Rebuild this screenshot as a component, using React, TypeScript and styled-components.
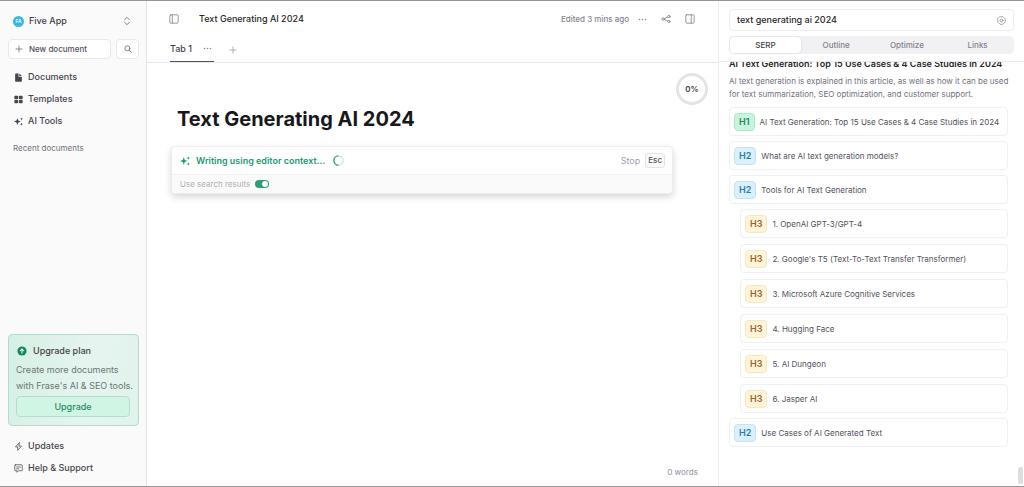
import React from 'react';
import styled, { createGlobalStyle, css } from 'styled-components';

const Global = createGlobalStyle`
  *, *::before, *::after { box-sizing: border-box; }
  body {
    margin: 0;
    background: #fff;
    color: #3f3f46;
    font-family: Inter, "Liberation Sans", sans-serif;
    font-size: 9px;
    line-height: 16px;
  }
  button, input { font: inherit; color: inherit; margin: 0; }
  button { border: 0; padding: 0; background: none; cursor: pointer; }
  h1, h2, p, ul { margin: 0; padding: 0; }
  ul { list-style: none; }
  svg { display: block; flex: none; }
`;

const Page = styled.div`
  display: grid;
  grid-template-columns: 147px minmax(0, 1fr) 305px;
  height: 100vh;
  border-top: 1px solid #97959a;
  border-bottom: 1px solid #97959a;
`;

/* ---------- sidebar ---------- */

const Sidebar = styled.aside`
  display: flex;
  flex-direction: column;
  padding: 12px 7px 7px 8px;
  background: #fafafa;
  border-right: 1px solid #e4e4e7;
`;

const Account = styled.button`
  display: flex;
  align-items: center;
  gap: 5px;
  padding: 0 8px 0 5px;
  font-weight: 500;
  text-align: left;
`;

const Avatar = styled.span`
  width: 11px;
  height: 11px;
  border-radius: 50%;
  background: #38b6ea;
  color: #fff;
  font-size: 5px;
  line-height: 11px;
  text-align: center;
`;

const Grow = styled.span`
  flex: 1;
`;

const Actions = styled.div`
  display: flex;
  gap: 5px;
  margin: 10px 0 7px;
`;

const OutlineButton = styled.button<{ $wide?: boolean }>`
  display: flex;
  align-items: center;
  gap: 6px;
  height: 20px;
  padding: 0 6px;
  border: 1px solid #e8e8eb;
  border-radius: 4px;
  background: #fff;
  color: #52525b;
  font-size: 8px;
  font-weight: 500;
  ${p => p.$wide ? css`flex: 1;` : css`width: 23px; justify-content: center;`}
`;

const NavLink = styled.a`
  display: flex;
  align-items: center;
  gap: 5px;
  height: 22px;
  padding-left: 6px;
  color: #46464d;
  font-weight: 500;
  text-decoration: none;
  svg { width: 9px; height: 9px; }
`;

const SectionLabel = styled.p`
  margin: 8px 0 auto;
  padding-left: 5px;
  color: #71717a;
  font-size: 8px;
`;

const UpgradeCard = styled.section`
  display: flex;
  flex-direction: column;
  margin-bottom: 9px;
  padding: 8px 8px 8px 7px;
  border: 1px solid #b3dccc;
  border-radius: 4px;
  background: linear-gradient(100deg, #d5f0e5, #e6f4ef 60%, #e0f3eb);
`;

const UpgradeTitle = styled.h2`
  display: flex;
  align-items: center;
  gap: 6px;
  margin-bottom: 3px;
  padding-left: 1px;
  font-size: 9px;
  font-weight: 500;
`;

const UpgradeText = styled.p`
  color: #6b7772;
  white-space: nowrap;
`;

const UpgradeButton = styled.button`
  height: 21px;
  margin-top: 2px;
  border: 1px solid #b0e0cd;
  border-radius: 4px;
  background: #d1f5e5;
  color: #2a8a66;
  font-weight: 500;
`;

/* ---------- editor ---------- */

const Main = styled.main`
  position: relative;
  display: flex;
  flex-direction: column;
  border-right: 1px solid #ececef;
`;

const Header = styled.header`
  display: flex;
  align-items: center;
  height: 36px;
  padding: 0 23px 0 22px;
  color: #85858d;
`;

const DocName = styled.span`
  margin-left: 20px;
  color: #27272a;
  font-weight: 500;
`;

const Edited = styled.span`
  margin-right: 9px;
  font-size: 8px;
  font-weight: 500;
`;

const Tools = styled.div`
  display: flex;
  align-items: center;
  gap: 14px;
`;

const Tabs = styled.nav`
  display: flex;
  height: 26px;
  padding-left: 23px;
  border-bottom: 1px solid #e9e9ec;
  color: #8b8b93;
`;

const Tab = styled.div`
  display: flex;
  align-items: center;
  gap: 11px;
  width: 44px;
  padding-bottom: 1px;
  border-bottom: 1px solid #52525b;
`;

const TabButton = styled.button`
  color: #3f3f46;
  font-weight: 500;
`;

const AddTab = styled.button`
  display: flex;
  align-items: center;
  margin-left: 15px;
`;

const Score = styled.div`
  position: absolute;
  top: 72px;
  right: 10px;
  width: 32px;
  height: 32px;
  border: 3px solid #e4e4e7;
  border-radius: 50%;
  font-size: 8px;
  font-weight: 600;
  line-height: 26px;
  text-align: center;
`;

const Editor = styled.div`
  flex: 1;
  padding: 41px 45px 0 24px;
`;

const DocTitle = styled.h1`
  padding-left: 6px;
  color: #18181b;
  font-size: 20px;
  font-weight: 700;
  line-height: 30px;
`;

const Prompt = styled.section`
  margin-top: 12px;
  border: 1px solid #ededf0;
  border-radius: 4px;
  background: #fff;
  box-shadow: 0 3px 7px rgba(0, 0, 0, 0.16);
  overflow: hidden;
`;

const PromptRow = styled.div`
  display: flex;
  align-items: center;
  height: 27px;
  padding: 0 7px 0 8px;
  color: #27996f;
`;

const PromptStatus = styled.span`
  margin: 0 8px 0 6px;
  font-weight: 600;
`;

const StopButton = styled.button`
  display: flex;
  align-items: center;
  gap: 5px;
  color: #a1a1aa;
`;

const Key = styled.kbd`
  padding: 0 2px;
  border: 1px solid #e4e4e7;
  border-radius: 3px;
  background: #fafafa;
  color: #52525b;
  font-family: inherit;
  font-size: 8px;
  font-weight: 500;
  line-height: 13px;
`;

const PromptOption = styled.label`
  display: flex;
  align-items: center;
  gap: 5px;
  height: 19px;
  padding-left: 8px;
  border-top: 1px solid #f1f1f3;
  background: #fafafa;
  color: #b0b0b6;
  font-size: 8px;
`;

const Toggle = styled.input`
  appearance: none;
  display: flex;
  align-items: center;
  justify-content: flex-end;
  width: 14px;
  height: 8px;
  padding: 1px;
  border-radius: 4px;
  background: #2a9f77;
  &::before {
    content: '';
    width: 6px;
    height: 6px;
    border-radius: 50%;
    background: #fff;
  }
`;

const WordCount = styled.footer`
  padding: 0 20px 6px;
  color: #a1a1aa;
  font-size: 8px;
  font-weight: 500;
  text-align: right;
`;

/* ---------- research panel ---------- */

const Panel = styled.aside`
  position: relative;
  display: flex;
  flex-direction: column;
  min-height: 0;
`;

const PanelHead = styled.div`
  padding: 8px 10px 7px;
  border-bottom: 1px solid #e9e9ec;
`;

const Query = styled.div`
  display: flex;
  align-items: center;
  height: 22px;
  padding: 0 7px;
  border: 1px solid #ececef;
  border-radius: 4px;
  color: #8b8b93;
`;

const QueryInput = styled.input`
  flex: 1;
  min-width: 0;
  padding: 0;
  border: 0;
  outline: 0;
  background: none;
  color: #27272a;
  font-size: 9px;
  font-weight: 500;
`;

const Segments = styled.div`
  display: grid;
  grid-template-columns: repeat(4, 1fr);
  margin-top: 5px;
  padding: 1px;
  border-radius: 5px;
  background: #f1f1f4;
`;

const Segment = styled.button<{ $active?: boolean }>`
  border-radius: 4px;
  color: ${p => (p.$active ? '#3f3f46' : '#81818a')};
  background: ${p => (p.$active ? '#fff' : 'transparent')};
  box-shadow: ${p => (p.$active ? '0 0 2px rgba(0, 0, 0, 0.15)' : 'none')};
  font-size: 8px;
  font-weight: 500;
`;

const Results = styled.div`
  flex: 1;
  min-height: 0;
  padding: 0 16px 0 10px;
  overflow: hidden;
`;

const ResultTitle = styled.h2`
  margin-top: -6px;
  color: #27272a;
  font-size: 9px;
  font-weight: 600;
  white-space: nowrap;
`;

const ResultText = styled.p`
  margin: 3px -8px 6px 0;
  color: #71717a;
  font-size: 8px;
  line-height: 13px;
`;

const Outline = styled.ul<{ $nested?: boolean }>`
  display: flex;
  flex-direction: column;
  gap: ${p => (p.$nested ? 6 : 5)}px;
  padding-left: ${p => (p.$nested ? 11 : 0)}px;
`;

const Heading = styled.div`
  display: flex;
  align-items: center;
  gap: 5px;
  height: 29px;
  padding-left: 4px;
  border: 1px solid #f0f0f2;
  border-radius: 4px;
  color: #52525b;
  font-size: 8px;
  white-space: nowrap;
`;

const levels = {
  H1: { bg: '#c6f6dc', line: '#a9e8c8', ink: '#2b8560' },
  H2: { bg: '#daf0fc', line: '#c3e4f4', ink: '#2b7ea8' },
  H3: { bg: '#fdf5d9', line: '#f5e8bb', ink: '#a0622d' },
};
type Level = keyof typeof levels;

const Badge = styled.span<{ $level: Level }>`
  padding: 0 4px;
  border: 1px solid ${p => levels[p.$level].line};
  border-radius: 4px;
  background: ${p => levels[p.$level].bg};
  color: ${p => levels[p.$level].ink};
  font-size: 9px;
  font-weight: 600;
`;

const ScrollThumb = styled.span`
  position: absolute;
  right: 1px;
  bottom: 2px;
  width: 5px;
  height: 17px;
  border-radius: 3px;
  background: #dddde1;
`;

/* ---------- icons ---------- */

const Line = ({ size = 10, children }: { size?: number; children: React.ReactNode }) => (
  <svg width={size} height={size} viewBox="0 0 24 24" fill="none" stroke="currentColor"
    strokeWidth="2" strokeLinecap="round" strokeLinejoin="round" aria-hidden="true">{children}</svg>
);
const Sparkles = ({ size = 10 }: { size?: number }) => (
  <svg width={size} height={size} viewBox="0 0 24 24" fill="currentColor" aria-hidden="true">
    <path d="M9 3l2.500 6.500L18 12l-6.500 2.500L9 21l-2.500-6.500L0 12l6.500-2.500z" />
    <path d="M20 1l1.200 2.800L24 5l-2.800 1.200L20 9l-1.200-2.800L16 5l2.800-1.200zM20 15l1.200 2.800L24 19l-2.800 1.200L20 23l-1.200-2.800L16 19l2.800-1.200z" />
  </svg>
);
const Plus = ({ size = 8 }: { size?: number }) => <Line size={size}><path d="M12 3v18M3 12h18" /></Line>;
const Dots = () => (
  <svg width="9" height="9" viewBox="0 0 24 24" fill="currentColor" aria-hidden="true">
    <circle cx="4" cy="12" r="2.200" /><circle cx="12" cy="12" r="2.200" /><circle cx="20" cy="12" r="2.200" />
  </svg>
);

const HeadingRow = ({ level, text }: { level: Level; text: string }) => (
  <Heading><Badge $level={level}>{level}</Badge>{text}</Heading>
);

const tools = [
  '1. OpenAI GPT-3/GPT-4',
  "2. Google's T5 (Text-To-Text Transfer Transformer)",
  '3. Microsoft Azure Cognitive Services',
  '4. Hugging Face',
  '5. AI Dungeon',
  '6. Jasper AI',
];

export default function App() {
  return (
    <>
      <Global />
      <Page>
        <Sidebar>
          <Account>
            <Avatar>FA</Avatar>Five App<Grow />
            <Line size={8}><path d="M5 8l7-7 7 7M5 16l7 7 7-7" /></Line>
          </Account>
          <Actions>
            <OutlineButton $wide><Plus />New document</OutlineButton>
            <OutlineButton aria-label="Search">
              <Line size={8}><circle cx="10" cy="10" r="7.500" /><path d="M15.500 15.500L22 22" /></Line>
            </OutlineButton>
          </Actions>
          <nav>
            <NavLink href="#documents">
              <svg viewBox="0 0 24 24" fill="currentColor" aria-hidden="true">
                <path d="M5 1h7v9h9v11a2 2 0 0 1-2 2H5a2 2 0 0 1-2-2V3a2 2 0 0 1 2-2zM14 1l7 7h-7z" />
              </svg>
              Documents
            </NavLink>
            <NavLink href="#templates">
              <svg viewBox="0 0 24 24" fill="currentColor" aria-hidden="true">
                <rect x="1" y="2" width="10" height="9" rx="2" /><rect x="13" y="2" width="10" height="9" rx="2" />
                <rect x="1" y="13" width="10" height="9" rx="2" /><rect x="13" y="13" width="10" height="9" rx="2" />
              </svg>
              Templates
            </NavLink>
            <NavLink href="#ai-tools"><Sparkles />AI Tools</NavLink>
          </nav>
          <SectionLabel>Recent documents</SectionLabel>
          <UpgradeCard>
            <UpgradeTitle>
              <svg width="10" height="10" viewBox="0 0 24 24" aria-hidden="true">
                <circle cx="12" cy="12" r="11" fill="#12885f" />
                <path d="M12 18V7M7 12l5-5 5 5" fill="none" stroke="#fff" strokeWidth="2.500" />
              </svg>
              Upgrade plan
            </UpgradeTitle>
            <UpgradeText>Create more documents<br />with Frase's AI &amp; SEO tools.</UpgradeText>
            <UpgradeButton>Upgrade</UpgradeButton>
          </UpgradeCard>
          <NavLink href="#updates">
            <Line><path d="M14 2L4 13h6v9l10-11h-6z" /></Line>Updates
          </NavLink>
          <NavLink href="#help">
            <Line><path d="M4 2h16a2 2 0 0 1 2 2v12a2 2 0 0 1-2 2h-8l-4 4v-4H4a2 2 0 0 1-2-2V4a2 2 0 0 1 2-2zM7 8h10M7 13h6" /></Line>
            Help &amp; Support
          </NavLink>
        </Sidebar>

        <Main>
          <Header>
            <button aria-label="Toggle sidebar">
              <Line><rect x="2" y="2" width="20" height="20" rx="2" /><path d="M8 2v20" /></Line>
            </button>
            <DocName>Text Generating AI 2024</DocName>
            <Grow />
            <Edited>Edited 3 mins ago</Edited>
            <Tools>
              <button aria-label="More"><Dots /></button>
              <button aria-label="Share">
                <Line><circle cx="5" cy="12" r="3" /><circle cx="19" cy="6" r="3" /><circle cx="19" cy="18" r="3" /><path d="M8 11l8-4M8 13l8 4" /></Line>
              </button>
              <button aria-label="Toggle panel">
                <Line><rect x="2" y="2" width="20" height="20" rx="2" /><path d="M15 2v20" /></Line>
              </button>
            </Tools>
          </Header>
          <Tabs>
            <Tab><TabButton>Tab 1</TabButton><Dots /></Tab>
            <AddTab aria-label="Add tab"><Plus /></AddTab>
          </Tabs>
          <Score>0%</Score>
          <Editor>
            <DocTitle>Text Generating AI 2024</DocTitle>
            <Prompt>
              <PromptRow>
                <Sparkles />
                <PromptStatus>Writing using editor context...</PromptStatus>
                <svg width="11" height="11" viewBox="0 0 24 24" fill="none" strokeWidth="3" aria-hidden="true">
                  <circle cx="12" cy="12" r="10" stroke="#c5eadb" />
                  <path d="M12 2a10 10 0 0 0 0 20" stroke="#2fa87f" />
                </svg>
                <Grow />
                <StopButton>Stop<Key>Esc</Key></StopButton>
              </PromptRow>
              <PromptOption>Use search results<Toggle type="checkbox" role="switch" defaultChecked /></PromptOption>
            </Prompt>
          </Editor>
          <WordCount>0 words</WordCount>
        </Main>

        <Panel>
          <PanelHead>
            <Query>
              <QueryInput aria-label="Search query" defaultValue="text generating ai 2024" />
              <button aria-label="Query settings">
                <Line size={9}><path d="M8 2h8l6 6v8l-6 6H8l-6-6V8z" /><circle cx="12" cy="12" r="4" /></Line>
              </button>
            </Query>
            <Segments>
              <Segment $active>SERP</Segment>
              <Segment>Outline</Segment>
              <Segment>Optimize</Segment>
              <Segment>Links</Segment>
            </Segments>
          </PanelHead>
          <Results>
            <ResultTitle>AI Text Generation: Top 15 Use Cases &amp; 4 Case Studies in 2024</ResultTitle>
            <ResultText>
              AI text generation is explained in this article, as well as how it can be used for text
              summarization, SEO optimization, and customer support.
            </ResultText>
            <Outline>
              <li><HeadingRow level="H1" text="AI Text Generation: Top 15 Use Cases &amp; 4 Case Studies in 2024" /></li>
              <li><HeadingRow level="H2" text="What are AI text generation models?" /></li>
              <li><HeadingRow level="H2" text="Tools for AI Text Generation" /></li>
              <li>
                <Outline $nested>
                  {tools.map(t => <li key={t}><HeadingRow level="H3" text={t} /></li>)}
                </Outline>
              </li>
              <li><HeadingRow level="H2" text="Use Cases of AI Generated Text" /></li>
            </Outline>
          </Results>
          <ScrollThumb />
        </Panel>
      </Page>
    </>
  );
}
